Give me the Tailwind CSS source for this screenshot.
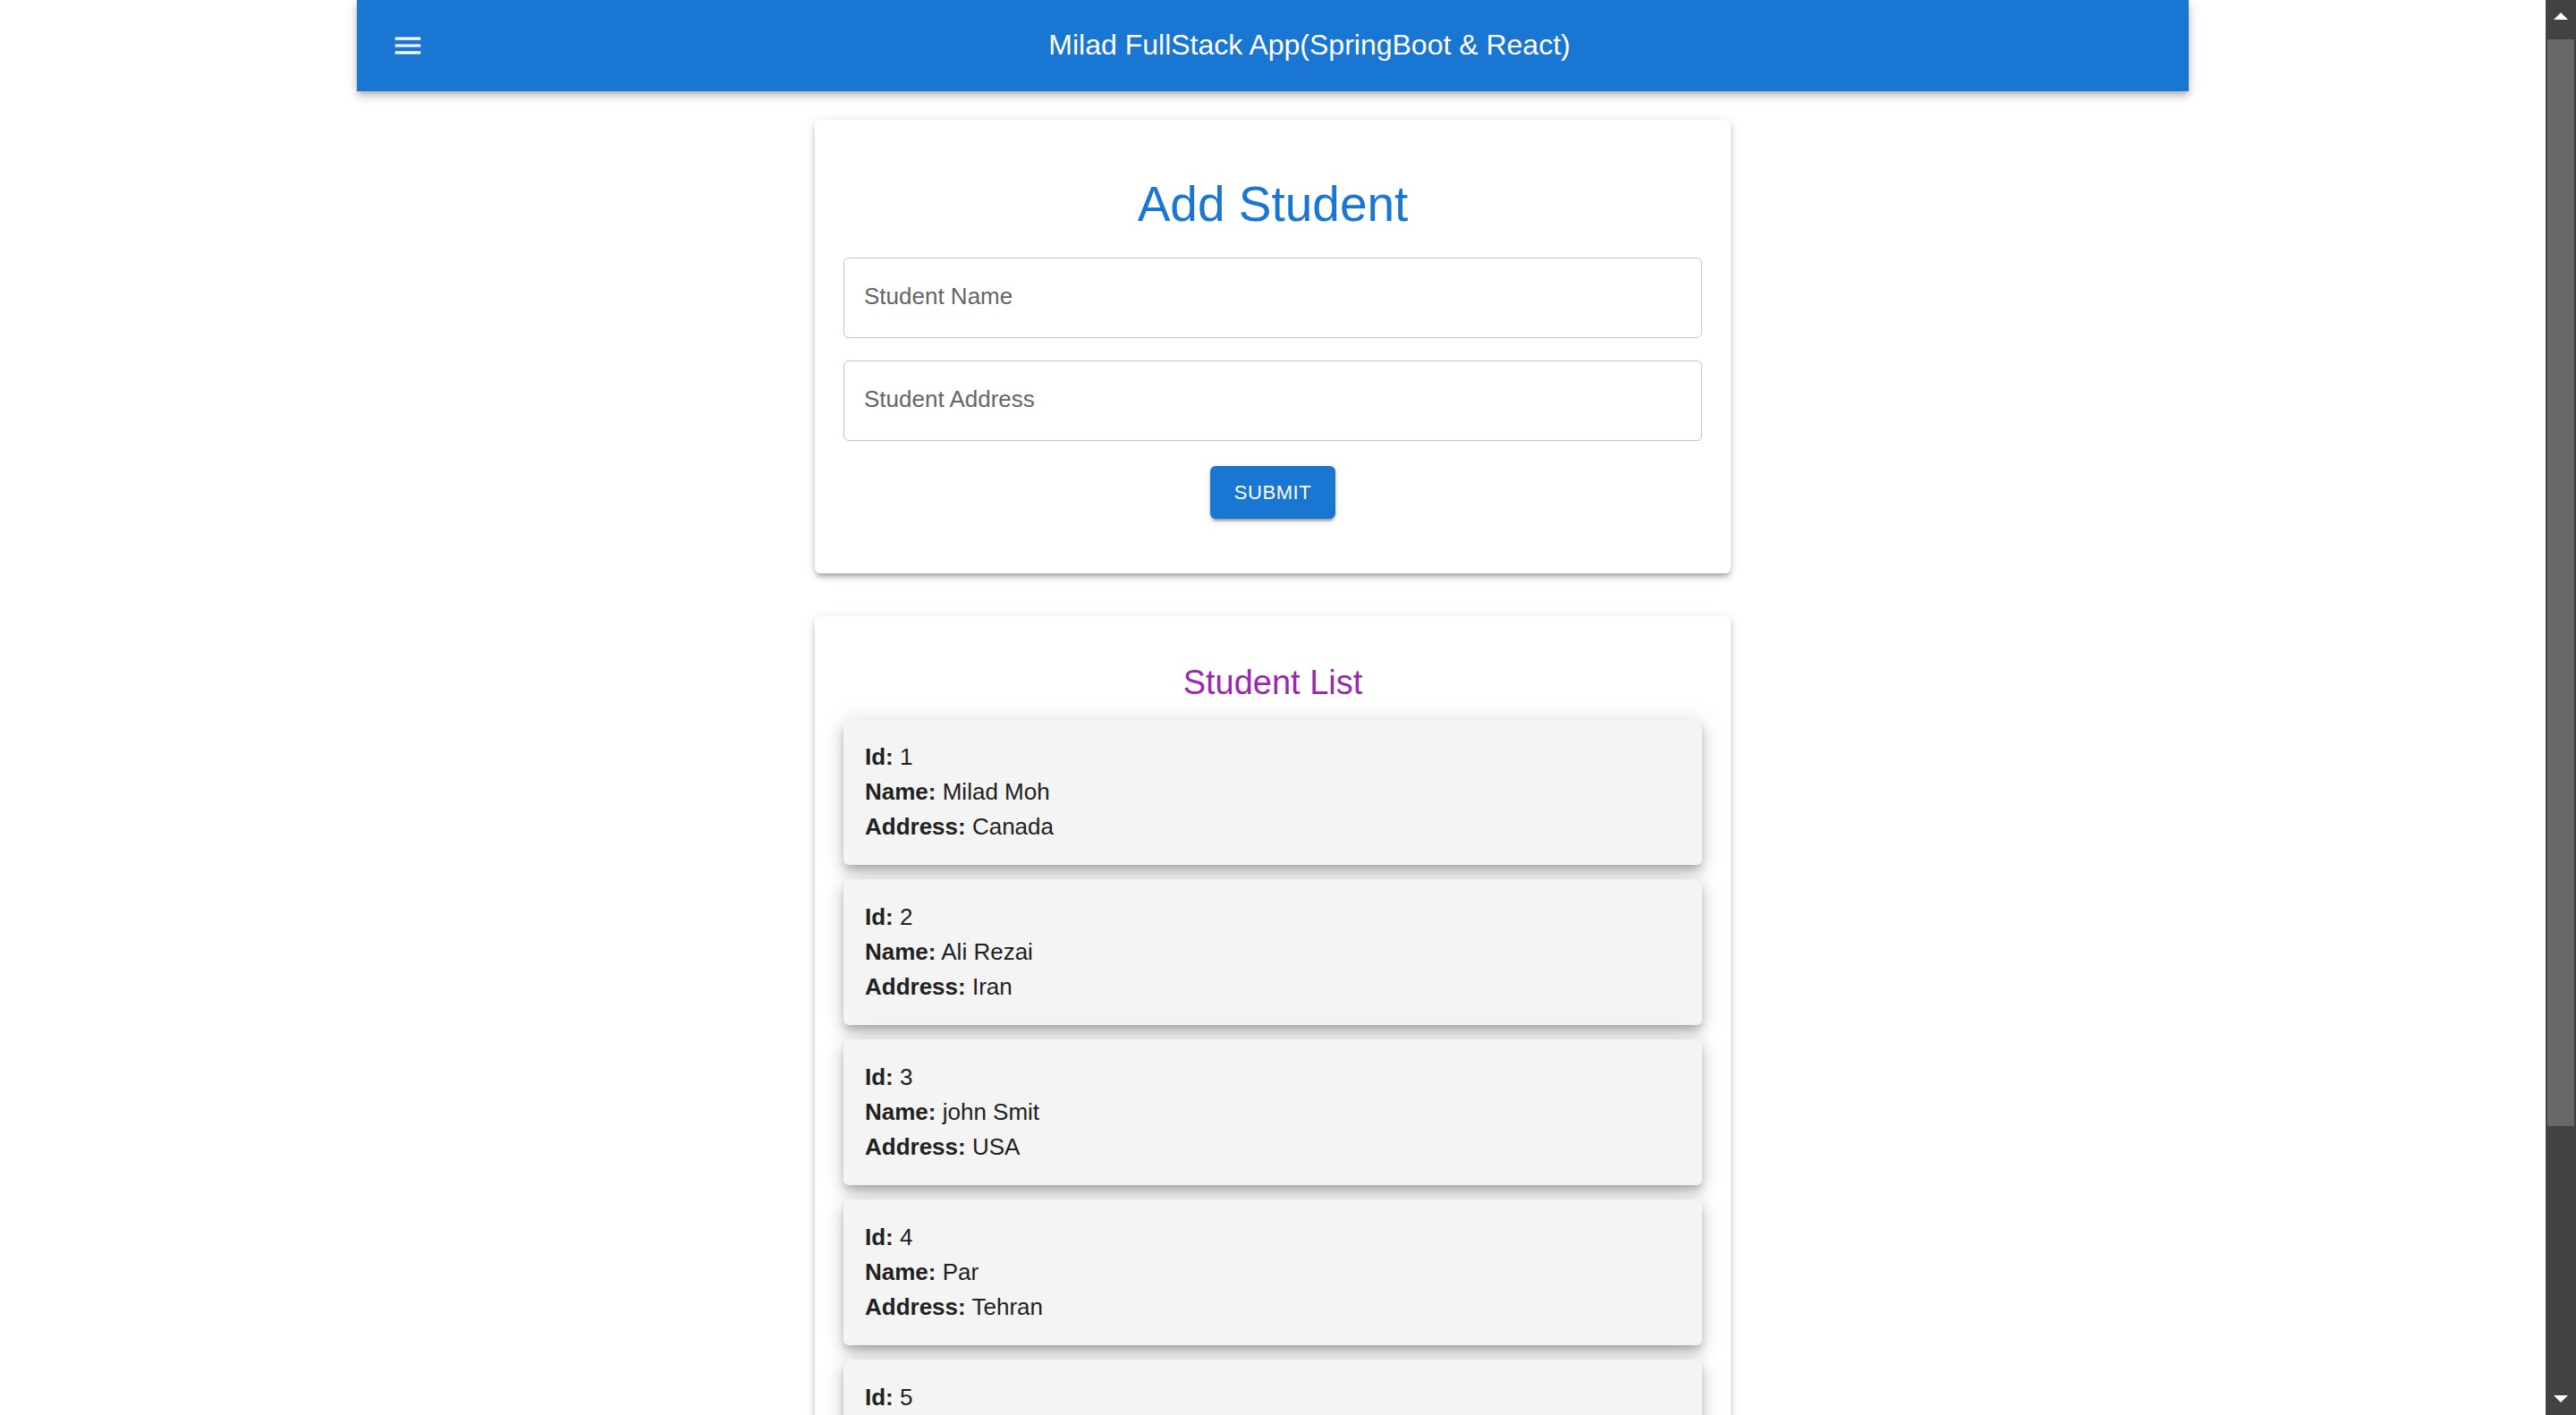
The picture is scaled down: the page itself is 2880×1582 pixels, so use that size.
<!DOCTYPE html>
<html lang="en">
<head>
<meta charset="utf-8">
<meta name="viewport" content="width=device-width, initial-scale=1">
<title>Milad FullStack App</title>
<script src="https://cdn.jsdelivr.net/npm/@tailwindcss/browser@4"></script>
</head>
<body class="flex h-screen overflow-hidden bg-white font-['Liberation_Sans',Arial,sans-serif] text-[26px] leading-[39px] text-[#212121]">
  <div class="h-full min-w-0 flex-1 overflow-hidden">
    <div class="mx-auto w-full max-w-[2048px]">
      <header class="flex h-[102px] items-center bg-[#1976d2] px-[38px] text-white shadow-[0_3px_6px_-2px_rgba(0,0,0,0.2),0_6px_8px_0_rgba(0,0,0,0.14),0_2px_16px_0_rgba(0,0,0,0.12)]">
        <button type="button" aria-label="menu" class="mr-11 shrink-0">
          <svg class="block size-[38px]" viewBox="0 0 24 24" fill="currentColor"><path d="M3 18h18v-2H3v2zm0-5h18v-2H3v2zm0-7v2h18V6H3z"/></svg>
        </button>
        <h6 class="flex-1 pb-[2px] text-center text-[32px] leading-[51px]">Milad FullStack App(SpringBoot &amp; React)</h6>
      </header>

      <main class="flex flex-col items-center gap-12 py-8">
        <section class="w-full rounded-md bg-white p-8 shadow-[0_5px_5px_-3px_rgba(0,0,0,0.2),0_5px_6px_0_rgba(0,0,0,0.14),0_2px_13px_0_rgba(0,0,0,0.12)] lg:w-1/2">
          <h1 class="pt-7 pb-[26px] text-center text-[55px] leading-[68px] text-[#1976d2]">Add Student</h1>
          <form class="flex flex-col items-center gap-[25px]">
            <div class="relative w-full">
              <input id="name" type="text" class="block h-[90px] w-full rounded-md border border-[#c4c4c4] px-[22px] outline-none">
              <label for="name" class="pointer-events-none absolute inset-y-0 left-[23px] flex items-center pb-1 text-[#666666]">Student Name</label>
            </div>
            <div class="relative w-full">
              <input id="address" type="text" class="block h-[90px] w-full rounded-md border border-[#c4c4c4] px-[22px] outline-none">
              <label for="address" class="pointer-events-none absolute inset-y-0 left-[23px] flex items-center pb-1 text-[#666666]">Student Address</label>
            </div>
            <button type="button" class="mt-[3px] mb-[29px] rounded-md bg-[#1976d2] px-[27px] py-[10px] text-[22px] leading-[39px] tracking-wide text-white shadow-[0_5px_2px_-3px_rgba(0,0,0,0.2),0_3px_3px_0_rgba(0,0,0,0.14),0_2px_8px_0_rgba(0,0,0,0.12)]">SUBMIT</button>
          </form>
        </section>

        <section class="w-full rounded-md bg-white p-8 shadow-[0_5px_5px_-3px_rgba(0,0,0,0.2),0_5px_6px_0_rgba(0,0,0,0.14),0_2px_13px_0_rgba(0,0,0,0.12)] lg:w-1/2">
          <h2 class="pt-4 pb-[14px] text-center text-[38px] leading-[53px] text-[#9c27b0]">Student List</h2>
          <ul class="flex flex-col gap-4">
            <li class="rounded-md bg-[#f4f4f4] px-6 py-[23px] shadow-[0_5px_8px_-2px_rgba(0,0,0,0.2),0_10px_16px_0_rgba(0,0,0,0.14),0_2px_29px_0_rgba(0,0,0,0.12)]"><p><b>Id:</b> 1</p><p><b>Name:</b> Milad Moh</p><p><b>Address:</b> Canada</p></li>
            <li class="rounded-md bg-[#f4f4f4] px-6 py-[23px] shadow-[0_5px_8px_-2px_rgba(0,0,0,0.2),0_10px_16px_0_rgba(0,0,0,0.14),0_2px_29px_0_rgba(0,0,0,0.12)]"><p><b>Id:</b> 2</p><p><b>Name:</b> Ali Rezai</p><p><b>Address:</b> Iran</p></li>
            <li class="rounded-md bg-[#f4f4f4] px-6 py-[23px] shadow-[0_5px_8px_-2px_rgba(0,0,0,0.2),0_10px_16px_0_rgba(0,0,0,0.14),0_2px_29px_0_rgba(0,0,0,0.12)]"><p><b>Id:</b> 3</p><p><b>Name:</b> john Smit</p><p><b>Address:</b> USA</p></li>
            <li class="rounded-md bg-[#f4f4f4] px-6 py-[23px] shadow-[0_5px_8px_-2px_rgba(0,0,0,0.2),0_10px_16px_0_rgba(0,0,0,0.14),0_2px_29px_0_rgba(0,0,0,0.12)]"><p><b>Id:</b> 4</p><p><b>Name:</b> Par</p><p><b>Address:</b> Tehran</p></li>
            <li class="rounded-md bg-[#f4f4f4] px-6 pt-[23px] pb-16 shadow-[0_5px_8px_-2px_rgba(0,0,0,0.2),0_10px_16px_0_rgba(0,0,0,0.14),0_2px_29px_0_rgba(0,0,0,0.12)]"><p><b>Id:</b> 5</p></li>
          </ul>
        </section>
      </main>
    </div>
  </div>

  <!-- Vertical scrollbar -->
  <div class="flex w-[34px] shrink-0 flex-col bg-[#424242] px-[2px]">
    <button type="button" aria-label="Scroll up" class="flex h-11 shrink-0 justify-center pt-[14px]">
      <svg class="block h-2 w-4" viewBox="0 0 16 8" fill="#fff"><path d="M8 0 16 8H0z"/></svg>
    </button>
    <div class="flex-[1215] bg-[#686868]"></div>
    <div class="flex-[279]"></div>
    <button type="button" aria-label="Scroll down" class="flex h-11 shrink-0 items-end justify-center pb-[14px]">
      <svg class="block h-2 w-4" viewBox="0 0 16 8" fill="#fff"><path d="M8 8 0 0h16z"/></svg>
    </button>
  </div>
</body>
</html>
